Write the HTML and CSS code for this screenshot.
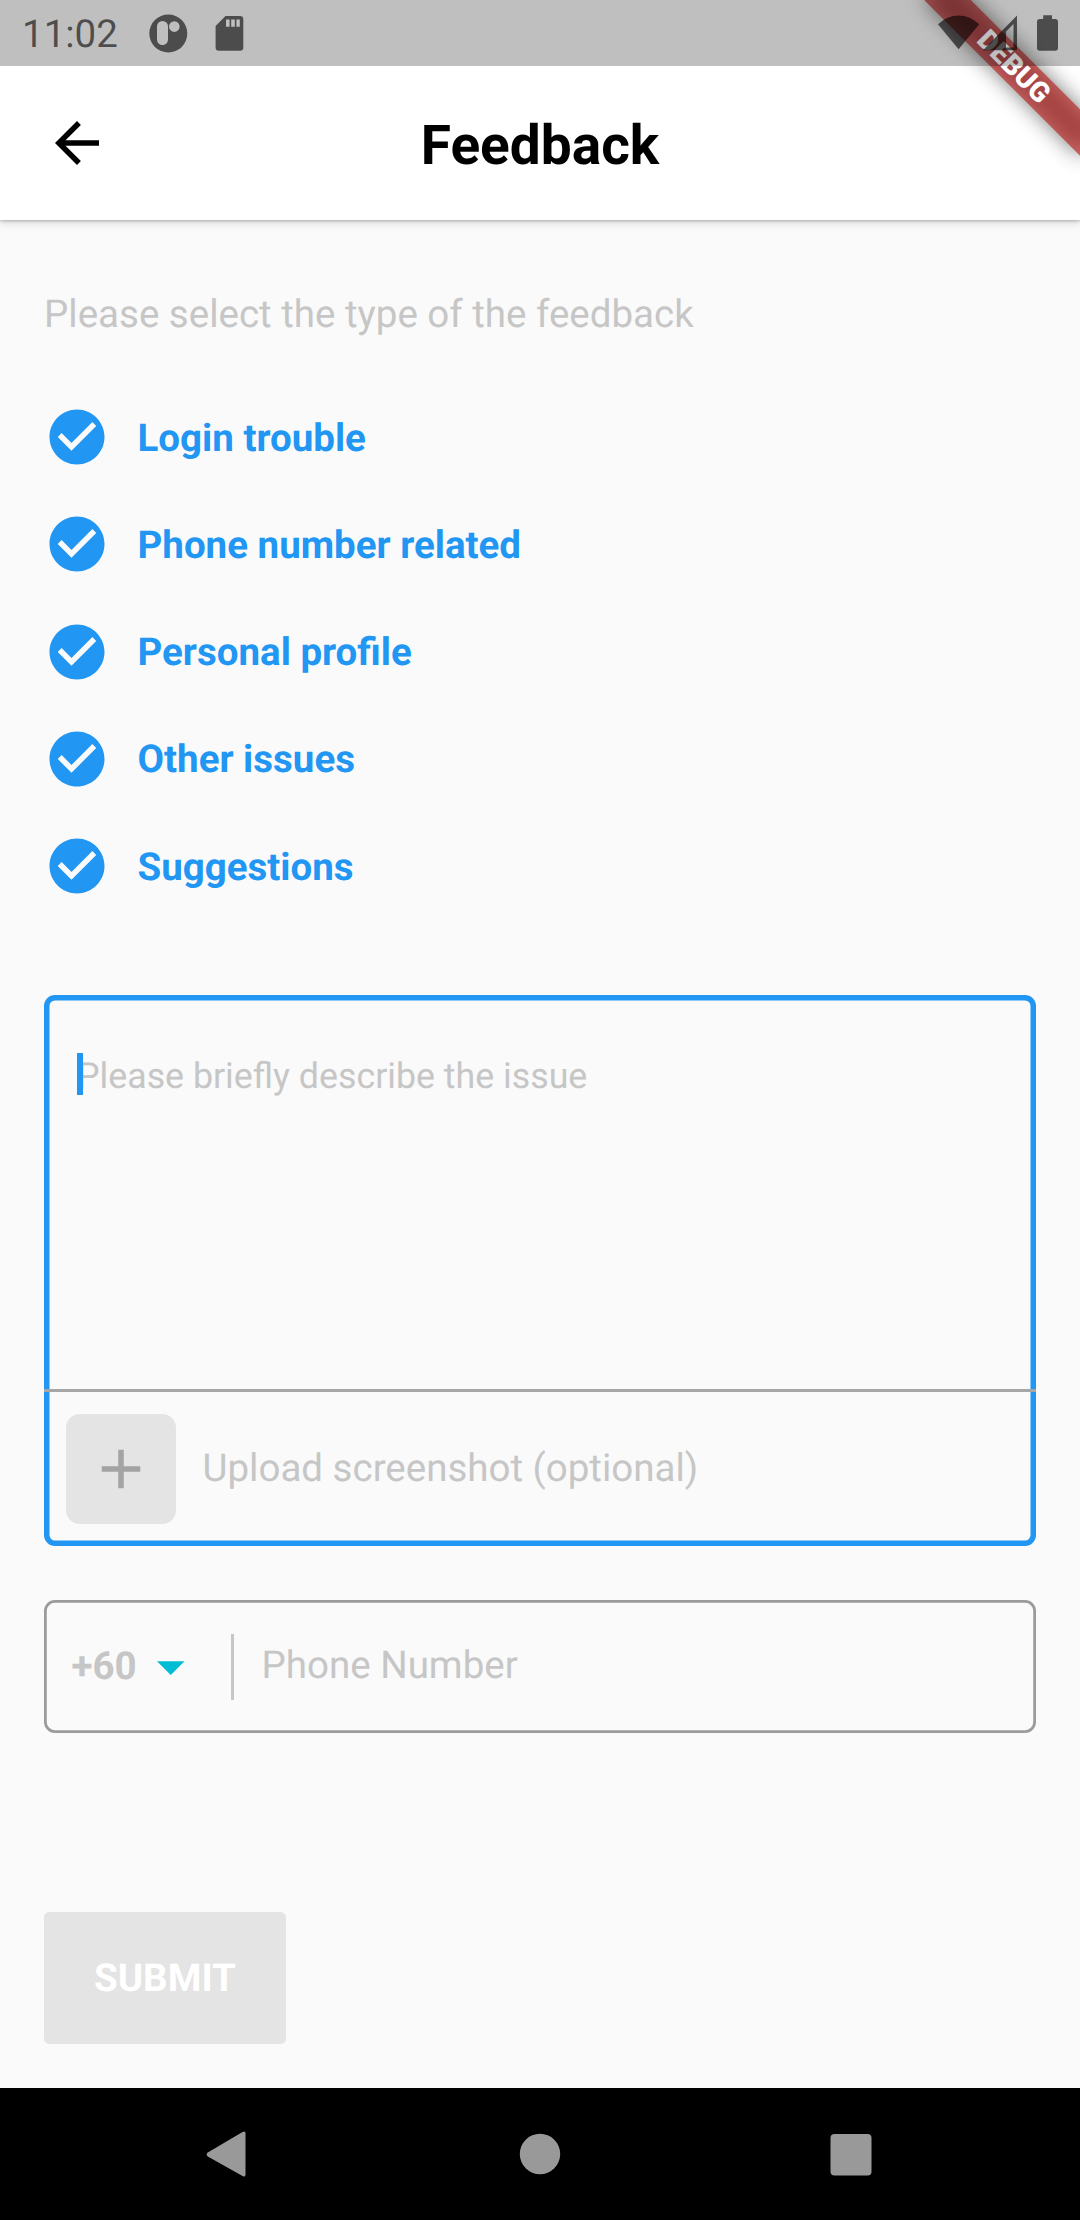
FILE: index.html
```html
<!DOCTYPE html>
<html lang="en">
<head>
<meta charset="utf-8">
<title>Feedback</title>
<link rel="stylesheet" href="styles.css">
</head>
<body>
<svg class="defs" aria-hidden="true">
  <symbol id="check-circle" viewBox="0 0 24 24"><path d="M12 2C6.48 2 2 6.48 2 12s4.480 10 10 10 10-4.480 10-10S17.520 2 12 2zm-2 15l-5-5 1.410-1.410L10 14.170l7.590-7.590L19 8l-9 9z"/></symbol>
</svg>
<div class="screen">
  <div class="status-scrim">
    <span class="clock">11:02</span>
    <svg class="status-left" width="150" height="66" viewBox="144 0 150 66">
      <path fill-rule="evenodd" d="M168.300 14.500a19 19 0 1 0 0 38a19 19 0 1 0 0-38zM162.500 21a5.500 5.500 0 0 1 5.500 5.500v13a5.500 5.500 0 0 1-11 0v-13a5.500 5.500 0 0 1 5.500-5.500zM174.300 21.300a5.300 5.300 0 1 1 0 10.600a5.300 5.300 0 1 1 0-10.600z"/>
      <path fill-rule="evenodd" d="M225.500 16H240a3.300 3.300 0 0 1 3.300 3.300V47.400a3.300 3.300 0 0 1-3.300 3.300H218.900a3.300 3.300 0 0 1-3.300-3.300V26zM226 19.500v7.300h3.600v-7.300zM231.200 19.500v7.300h3.600v-7.300zM236.400 19.500v7.300h3.400v-7.300z"/>
    </svg>
    <svg class="status-right" width="150" height="66" viewBox="930 0 150 66">
      <path d="M938 24.300Q947 15.500 958.600 15.500T979.200 24.300L958.600 49.300z"/>
      <path fill-rule="evenodd" d="M983 50.300L1017 15.500V50.300zM1006 31.500V47.500H1013.500V24z"/>
      <path d="M1043.200 15.200h8.800v3.800h3.200a2.800 2.800 0 0 1 2.800 2.800V48a2.800 2.800 0 0 1-2.800 2.800h-15.400a2.800 2.800 0 0 1-2.800-2.800V21.800a2.800 2.800 0 0 1 2.800-2.800h3.400z"/>
    </svg>
  </div>

  <header class="app-bar">
    <svg class="back" viewBox="0 0 24 24"><path d="M20 11H7.830l5.590-5.590L12 4l-8 8 8 8 1.410-1.410L7.830 13H20v-2z"/></svg>
    <h1>Feedback</h1>
  </header>

  <main>
    <p class="prompt">Please select the type of the feedback</p>
    <ul class="types">
      <li><svg><use href="#check-circle"/></svg><span>Login trouble</span></li>
      <li><svg><use href="#check-circle"/></svg><span>Phone number related</span></li>
      <li><svg><use href="#check-circle"/></svg><span>Personal profile</span></li>
      <li><svg><use href="#check-circle"/></svg><span>Other issues</span></li>
      <li><svg><use href="#check-circle"/></svg><span>Suggestions</span></li>
    </ul>

    <section class="issue">
      <div class="describe">
        <span class="caret"></span>
        <span class="hint">Please briefly describe the issue</span>
      </div>
      <div class="upload">
        <span class="add"><svg viewBox="0 0 24 24"><path d="M19 13h-6v6h-2v-6H5v-2h6V5h2v6h6v2z"/></svg></span>
        <span>Upload screenshot (optional)</span>
      </div>
    </section>

    <div class="phone">
      <span class="code">+60</span>
      <svg class="drop" viewBox="0 0 28 14"><path d="M0 0h28L14 14z"/></svg>
      <span class="rule"></span>
      <span class="number">Phone Number</span>
    </div>

    <div class="submit">SUBMIT</div>
  </main>

  <nav class="nav-bar">
    <svg viewBox="0 0 66 66"><path d="M48.500 12.500v41q0 3-3 1.500L10.800 35.500q-2.300-2 0-4L45.500 11q3-1.500 3 1.500z"/></svg>
    <svg viewBox="0 0 66 66"><circle cx="33" cy="33" r="20.200"/></svg>
    <svg viewBox="0 0 66 66"><rect x="12.500" y="13" width="41" height="41.500" rx="4"/></svg>
  </nav>

  <div class="banner-corner"><div class="banner">DEBUG</div></div>
</div>
</body>
</html>
```
FILE: styles.css
```css
* { box-sizing: border-box; }

body {
  margin: 0;
  background: #fafafa;
  font-family: Roboto, "Liberation Sans", sans-serif;
  font-size: 38.5px;
  line-height: 46px;
  color: #c6c6c6;
  text-rendering: geometricPrecision;
}

.defs { position: absolute; width: 0; height: 0; }

.screen {
  position: relative;
  width: 1080px;
  height: 2220px;
  overflow: hidden;
  display: flex;
  flex-direction: column;
}

/* The system bar is translucent and covers the top of the app */
.status-scrim {
  position: absolute;
  top: 0;
  left: 0;
  z-index: 3;
  width: 100%;
  height: 66px;
  display: flex;
  align-items: center;
  padding-left: 22px;
  background: rgba(0, 0, 0, .25);
  color: rgba(0, 0, 0, .6);
}
.status-scrim svg { fill: rgba(0, 0, 0, .6); }
.clock { width: 122px; padding-top: 4px; }
.status-right { margin-left: auto; }

.app-bar {
  position: relative;
  flex: none;
  height: 220px;
  padding: 66px 44px 0;
  display: grid;
  grid-template-columns: 66px 1fr 66px;
  align-items: center;
  background: #fff;
  box-shadow: 0 1px 3px rgba(0, 0, 0, .25), 0 3px 9px rgba(0, 0, 0, .12);
}
.back { width: 66px; height: 66px; fill: #000; }
h1 {
  margin: 0;
  padding-top: 6px;
  color: #000;
  font-size: 55px;
  line-height: 64px;
  font-weight: 700;
  text-align: center;
}

main { flex: 1; padding: 72px 44px 0; }
.prompt { margin: 0 0 45.5px; }

.types { margin: 0; padding: 0; list-style: none; }
.types li {
  display: flex;
  align-items: center;
  gap: 27.5px;
  height: 107.25px;
  color: #2196f3;
  font-weight: 700;
}
.types span { padding-top: 3px; }
.types svg { width: 66px; height: 66px; fill: #2196f3; }

.issue {
  display: flex;
  flex-direction: column;
  height: 550.5px;
  margin-top: 75.5px;
  border-radius: 11px;
  box-shadow: inset 0 0 0 5.5px #2196f3;
}
.describe {
  display: flex;
  align-items: flex-start;
  flex: 1;
  padding: 58px 33px 0;
  font-size: 35.75px;
  line-height: 42px;
}
.caret { width: 5.5px; height: 42px; margin-right: -5.5px; background: #2196f3; z-index: 1; }
.hint { padding-top: 2px; }
.upload {
  display: flex;
  align-items: center;
  gap: 26.5px;
  height: 157px;
  padding: 3px 22px 0;
  background: linear-gradient(#a6a6a6, #a6a6a6) top / 100% 3px no-repeat;
}
.add {
  display: grid;
  place-items: center;
  width: 110px;
  height: 110px;
  border-radius: 13.75px;
  background: #e4e4e4;
}
.add svg { width: 66px; height: 66px; fill: #a3a3a3; }

.phone {
  display: flex;
  align-items: center;
  height: 133px;
  margin-top: 54.5px;
  padding-left: 27.5px;
  border-radius: 11px;
  box-shadow: inset 0 0 0 2.75px #9b9b9b;
}
.code { width: 85.500px; padding-top: 1px; font-weight: 700; }
.drop { width: 27.5px; height: 14px; margin-top: 3px; fill: #00bcd4; }
.rule { width: 3px; height: 66px; margin: 0 27.5px 0 46.5px; background: #c6c6c6; }
.number { padding-bottom: 2px; }

.submit {
  display: grid;
  place-items: center;
  width: 242px;
  height: 132px;
  margin-top: 179px;
  padding-top: 2px;
  border-radius: 5.5px;
  background: #e4e4e4;
  color: #fff;
  font-weight: 700;
}

.nav-bar {
  flex: none;
  display: flex;
  justify-content: center;
  align-items: center;
  gap: 244.5px;
  height: 132px;
  background: #000;
}
.nav-bar svg { width: 66px; height: 66px; fill: #999; }

.banner-corner {
  position: absolute;
  top: 0;
  right: 0;
  z-index: 2;
  width: 300px;
  height: 300px;
  overflow: hidden;
}
.banner {
  position: absolute;
  left: 123.9px;
  top: 49.6px;
  width: 220px;
  height: 33px;
  transform: rotate(45deg);
  color: #fff;
  font-size: 28.05px;
  font-weight: 900;
  line-height: 33px;
  text-align: center;
}
/* Shadow first, then the red band over it, both behind the label */
.banner::before,
.banner::after {
  content: "";
  position: absolute;
  inset: 0;
}
.banner::before {
  z-index: -2;
  background: rgba(0, 0, 0, .5);
  filter: blur(10.9px);
}
.banner::after {
  z-index: -1;
  background: rgba(183, 28, 28, .63);
}
```
